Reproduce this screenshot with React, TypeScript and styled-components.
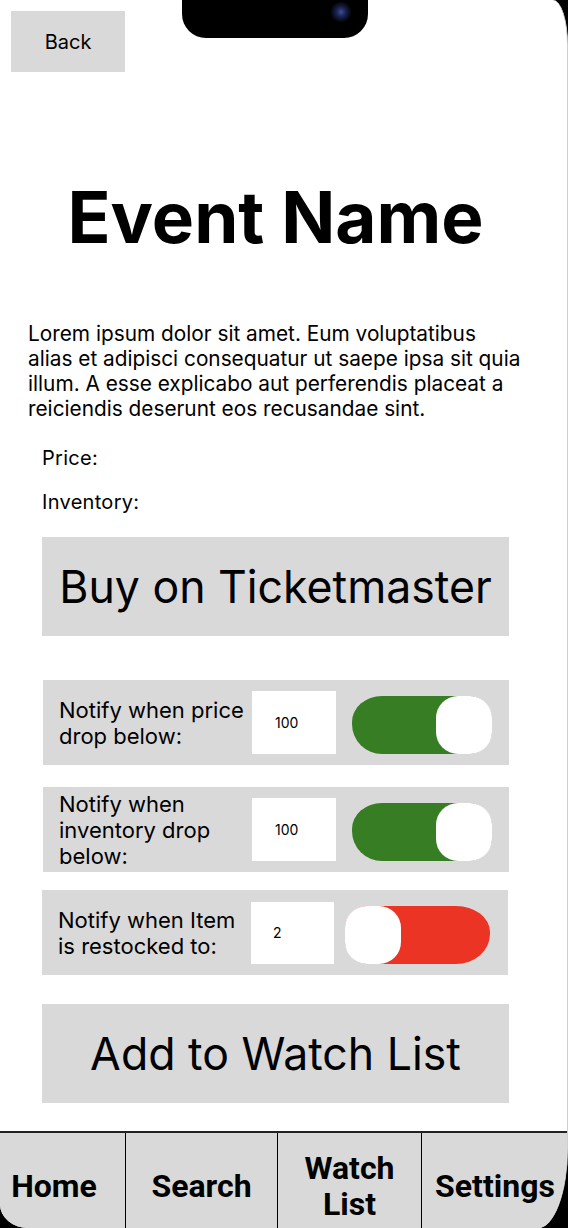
import React, { useState } from "react";
import styled, { createGlobalStyle } from "styled-components";

const Global = createGlobalStyle`
  html, body { margin: 0; padding: 0; background: #000; }
  * { box-sizing: border-box; }
`;

const Screen = styled.div`
  position: relative;
  width: 568px;
  height: 1228px;
  background: #fff;
  overflow: hidden;
  border-right: 1px solid #cfcfcf;
  border-radius: 0 15px 30px 28px / 0 45px 80px 24px;
  font-family: Inter, "Noto Sans", sans-serif;
  color: #000;
  display: flex;
  flex-direction: column;
  & > * { flex-shrink: 0; }
`;

const Notch = styled.div`
  position: absolute;
  left: 182px;
  top: 0;
  width: 186px;
  height: 38px;
  background: #000;
  border-radius: 0 0 24px 24px;
`;

const Camera = styled.div`
  position: absolute;
  left: 149px;
  top: 2px;
  width: 20px;
  height: 20px;
  border-radius: 50%;
  background: radial-gradient(circle, #3b4f9a 0%, #1c2555 30%, #0a0d1e 60%, #000 100%);
`;

const BackButton = styled.button`
  margin: 11px 0 0 11px;
  width: 114px;
  height: 61px;
  border: none;
  background: #d9d9d9;
  font-family: Inter, sans-serif;
  font-size: 20px;
  color: #000;
  display: flex;
  align-items: center;
  justify-content: center;
  padding: 0;
`;

const Content = styled.div`
  width: 551px;
  display: flex;
  flex-direction: column;
  & > * { flex-shrink: 0; }
`;

const Title = styled.h1`
  margin: 102px 0 0;
  font-size: 71px;
  line-height: 87px;
  font-weight: 700;
  text-align: center;
`;

const Paragraph = styled.p`
  margin: 60px 0 0 28px;
  width: 520px;
  font-size: 20.8px;
  line-height: 25px;
`;

const Info = styled.div<{ $top: number }>`
  margin: ${(p) => p.$top}px 0 0 42px;
  font-size: 20px;
  letter-spacing: 0.3px;
  line-height: 25px;
`;

const BigButton = styled.button<{ $top: number }>`
  margin: ${(p) => p.$top}px 0 0 42px;
  width: 467px;
  height: 99px;
  border: none;
  background: #d9d9d9;
  font-family: Inter, sans-serif;
  font-size: 44.6px;
  color: #000;
  display: flex;
  align-items: center;
  justify-content: center;
  padding: 0;
`;

const Row = styled.div<{ $top: number; $left: number; $gap: number }>`
  margin: ${(p) => p.$top}px 0 0 ${(p) => p.$left}px;
  width: 466px;
  height: 85px;
  background: #d9d9d9;
  display: flex;
  align-items: center;
  padding-left: 16px;
  & > :nth-child(3) { margin-left: ${(p) => p.$gap}px; }
`;

const Label = styled.div`
  width: 193px;
  flex: none;
  font-size: 22px;
  line-height: 26px;
`;

const Field = styled.input<{ $w: number; $h: number; $pad: number }>`
  width: ${(p) => p.$w}px;
  height: ${(p) => p.$h}px;
  flex: none;
  border: none;
  outline: none;
  background: #fff;
  font-family: Inter, sans-serif;
  font-size: 14px;
  color: #000;
  padding: 0 0 0 ${(p) => p.$pad}px;
`;

const Track = styled.button<{ $on: boolean; $w: number }>`
  width: ${(p) => p.$w}px;
  height: 58px;
  flex: none;
  margin-top: 5px;
  border: none;
  padding: 0;
  background: ${(p) => (p.$on ? "#367d23" : "#eb3424")};
  border-radius: ${(p) =>
    p.$on ? "30px 23px 23px 30px / 26px 23px 23px 30px" : "23px 34px 34px 23px / 23px 26px 30px 23px"};
  display: flex;
  justify-content: ${(p) => (p.$on ? "flex-end" : "flex-start")};
  cursor: pointer;
`;

const Knob = styled.span`
  width: 56px;
  height: 100%;
  background: #fff;
  border-radius: 22px;
`;

const Nav = styled.nav`
  margin: 28px 0 0 -17px;
  width: 585px;
  height: 107px;
  background: #d9d9d9;
  border-top: 2px solid #222;
  display: grid;
  grid-template-columns: 142px 152px 144px 147px;
`;

const NavItem = styled.div`
  display: flex;
  align-items: center;
  justify-content: center;
  text-align: center;
  font-family: Roboto, "Liberation Sans", sans-serif;
  font-weight: 700;
  font-size: 32px;
  line-height: 36px;
  white-space: nowrap;
  & + & { border-left: 1.5px solid #000; }
`;

type Rule = {
  label: string;
  value: string;
  on: boolean;
  top: number;
  left: number;
  gap: number;
  w: number;
  h: number;
  pad: number;
  tw: number;
};

const rulesInit: Rule[] = [
  { label: "Notify when price drop below:", value: "100", on: true, top: 44, left: 43, gap: 16, w: 84, h: 63, pad: 23, tw: 140 },
  { label: "Notify when inventory drop below:", value: "100", on: true, top: 22, left: 43, gap: 16, w: 84, h: 63, pad: 23, tw: 140 },
  { label: "Notify when Item is restocked to:", value: "2", on: false, top: 18, left: 42, gap: 11, w: 83, h: 62, pad: 22, tw: 145 },
];

export default function App() {
  const [rules, setRules] = useState(rulesInit);
  const toggle = (i: number) =>
    setRules((r) => r.map((x, j) => (j === i ? { ...x, on: !x.on } : x)));
  const setVal = (i: number, v: string) =>
    setRules((r) => r.map((x, j) => (j === i ? { ...x, value: v } : x)));

  return (
    <>
      <Global />
      <Screen>
        <Notch>
          <Camera />
        </Notch>
        <BackButton>Back</BackButton>
        <Content>
          <Title>Event Name</Title>
          <Paragraph>
            Lorem ipsum dolor sit amet. Eum voluptatibus
            <br />
            alias et adipisci consequatur ut saepe ipsa sit quia
            <br />
            illum. A esse explicabo aut perferendis placeat a
            <br />
            reiciendis deserunt eos recusandae sint.
          </Paragraph>
          <Info $top={25}>Price:</Info>
          <Info $top={19}>Inventory:</Info>
          <BigButton $top={22}>Buy on Ticketmaster</BigButton>
          {rules.map((r, i) => (
            <Row key={i} $top={r.top} $left={r.left} $gap={r.gap}>
              <Label>{r.label}</Label>
              <Field $w={r.w} $h={r.h} $pad={r.pad} value={r.value} onChange={(e) => setVal(i, e.target.value)} />
              <Track $on={r.on} $w={r.tw} onClick={() => toggle(i)}>
                <Knob />
              </Track>
            </Row>
          ))}
          <BigButton $top={29}>Add to Watch List</BigButton>
        </Content>
        <Nav>
          <NavItem>Home</NavItem>
          <NavItem>Search</NavItem>
          <NavItem>
            Watch
            <br />
            List
          </NavItem>
          <NavItem>Settings</NavItem>
        </Nav>
      </Screen>
    </>
  );
}
